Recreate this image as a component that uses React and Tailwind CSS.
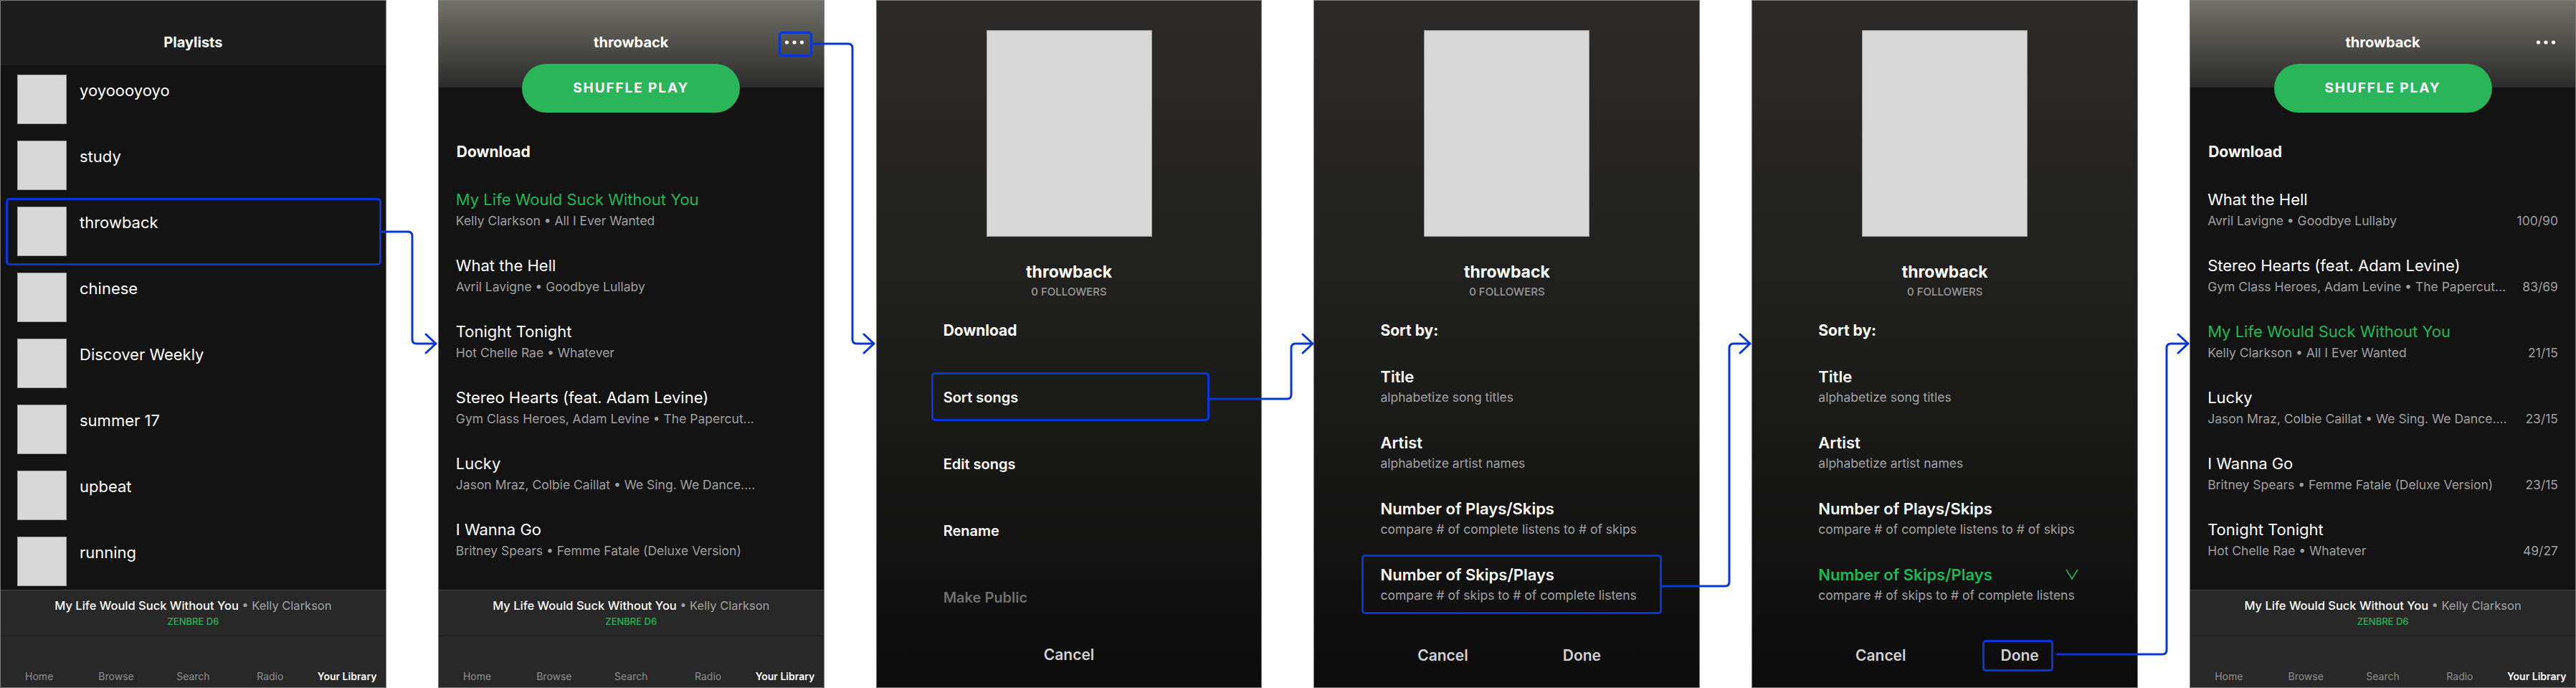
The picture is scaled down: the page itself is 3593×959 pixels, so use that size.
import React from "react";

const BLUE = "#0b36d6";

const playlists = [
  "yoyoooyoyo",
  "study",
  "throwback",
  "chinese",
  "Discover Weekly",
  "summer 17",
  "upbeat",
  "running",
];

const songsBefore = [
  { title: "My Life Would Suck Without You", sub: "Kelly Clarkson • All I Ever Wanted", active: true },
  { title: "What the Hell", sub: "Avril Lavigne • Goodbye Lullaby" },
  { title: "Tonight Tonight", sub: "Hot Chelle Rae • Whatever" },
  { title: "Stereo Hearts (feat. Adam Levine)", sub: "Gym Class Heroes, Adam Levine • The Papercut..." },
  { title: "Lucky", sub: "Jason Mraz, Colbie Caillat • We Sing. We Dance...." },
  { title: "I Wanna Go", sub: "Britney Spears • Femme Fatale (Deluxe Version)" },
];

const songsAfter = [
  { title: "What the Hell", sub: "Avril Lavigne • Goodbye Lullaby", count: "100/90" },
  { title: "Stereo Hearts (feat. Adam Levine)", sub: "Gym Class Heroes, Adam Levine • The Papercut...", count: "83/69" },
  { title: "My Life Would Suck Without You", sub: "Kelly Clarkson • All I Ever Wanted", count: "21/15", active: true },
  { title: "Lucky", sub: "Jason Mraz, Colbie Caillat • We Sing. We Dance....", count: "23/15" },
  { title: "I Wanna Go", sub: "Britney Spears • Femme Fatale (Deluxe Version)", count: "23/15" },
  { title: "Tonight Tonight", sub: "Hot Chelle Rae • Whatever", count: "49/27" },
];

const sortOptions = [
  { title: "Title", sub: "alphabetize song titles" },
  { title: "Artist", sub: "alphabetize artist names" },
  { title: "Number of Plays/Skips", sub: "compare # of complete listens to # of skips" },
  { title: "Number of Skips/Plays", sub: "compare # of skips to # of complete listens" },
];

const Panel = ({ className = "", children }) => (
  <div className={`relative flex min-w-0 flex-1 flex-col overflow-hidden border border-[#7d7d7d] ${className}`}>
    {children}
  </div>
);

const Highlight = ({ className }) => (
  <div className={`pointer-events-none absolute rounded-[5px] border-[3px] border-[#0b36d6] ${className}`} />
);

const Dots = () => (
  <svg width="28" height="8" viewBox="0 0 28 8">
    <circle cx="3.5" cy="4" r="2.6" fill="#fff" />
    <circle cx="14" cy="4" r="2.6" fill="#fff" />
    <circle cx="24.5" cy="4" r="2.6" fill="#fff" />
  </svg>
);

const BottomBars = () => (
  <div className="shrink-0">
    <div className="h-[65px] border-t border-[#444] border-b border-b-[#1b1b1b] bg-[#282828] pt-[11px] text-center">
      <div className="text-[16.5px] leading-[20px] font-medium text-white">
        My Life Would Suck Without You <span className="text-[#a3a3a3] font-normal">• Kelly Clarkson</span>
      </div>
      <div className="mt-[3px] text-[13px] leading-[18px] font-medium text-[#1db954]">ZENBRE D6</div>
    </div>
    <div className="grid h-[71px] grid-cols-5 items-end bg-[#282828] pb-[5px] text-center text-[14px] leading-[20px]">
      <span className="text-[#8f8f8f]">Home</span>
      <span className="text-[#8f8f8f]">Browse</span>
      <span className="text-[#8f8f8f]">Search</span>
      <span className="text-[#8f8f8f]">Radio</span>
      <span className="font-semibold text-white">Your Library</span>
    </div>
  </div>
);

const PlaylistHeader = ({ highlightDots }) => (
  <>
    <div className="relative flex h-[36px] items-center justify-center mt-[40px]">
      <span className="text-[20px] font-bold text-white">throwback</span>
      <div className="absolute right-[27px] top-[14px] flex">
        <Dots />
      </div>
      {highlightDots && <Highlight className="right-[16px] top-[3px] h-[35px] w-[47px]" />}
    </div>
    <div className="mt-[12px] flex justify-center">
      <div className="flex h-[68px] w-[304px] items-center justify-center rounded-full bg-[#2bb55a] text-[19px] font-bold tracking-[0.1em] text-white">
        SHUFFLE PLAY
      </div>
    </div>
    <div className="mt-[41px] px-[25px] text-[21px] leading-[28px] font-bold text-white">Download</div>
  </>
);

const SongRow = ({ song }) => (
  <div className="h-[92px] px-[24px]">
    <div className={`text-[22px] leading-[30px] whitespace-nowrap ${song.active ? "text-[#1db954]" : "text-white"}`}>
      {song.title}
    </div>
    <div className="flex justify-between text-[17.5px] leading-[30px] text-[#a0a0a0] whitespace-nowrap">
      <span>{song.sub}</span>
      {song.count && <span>{song.count}</span>}
    </div>
  </div>
);

const SheetTop = () => (
  <>
    <div className="mt-[41px] flex justify-center">
      <div className="h-[288px] w-[231px] border border-[#9d9d9d] bg-[#d7d7d7]" />
    </div>
    <div className="mt-[34px] text-center text-[23px] leading-[30px] font-bold text-white">throwback</div>
    <div className="mt-[2px] text-center text-[15px] leading-[22px] font-medium text-[#9a9a9a]">0 FOLLOWERS</div>
  </>
);

const SortPanel = ({ chosen }) => (
  <Panel className="bg-[linear-gradient(180deg,#2c2b29_0%,#1f1f1e_45%,#0c0c0c_100%)]">
    <SheetTop />
    <div className="mt-[29px] px-[92px] text-[21px] leading-[28px] font-bold text-white">Sort by:</div>
    <div className="mt-[36px]">
      {sortOptions.map((o, i) => {
        const isLast = i === sortOptions.length - 1;
        return (
          <div key={o.title} className="relative h-[92px] pl-[92px] pr-[82px]">
            <div
              className={`flex items-center justify-between text-[22px] leading-[28px] font-semibold ${
                chosen && isLast ? "text-[#1db954]" : "text-white"
              }`}
            >
              <span>{o.title}</span>
              {chosen && isLast && (
                <svg width="18" height="16" viewBox="0 0 18 16">
                  <polyline points="1,1 9,14 17,1" fill="none" stroke="#1db954" strokeWidth="1.6" />
                </svg>
              )}
            </div>
            <div className="text-[17.5px] leading-[30px] text-[#a3a3a3] whitespace-nowrap">{o.sub}</div>
            {!chosen && isLast && <Highlight className="-top-[14px] left-[66px] h-[83px] w-[419px]" />}
          </div>
        );
      })}
    </div>
    <div className="mt-[21px] grid grid-cols-2 pl-[82px] pr-[67px] text-center text-[21px] leading-[28px] font-semibold text-[#d2d2d2]">
      <span>Cancel</span>
      <span className="relative">
        Done
        {chosen && <Highlight className="-top-[8px] left-[45px] h-[44px] w-[99px]" />}
      </span>
    </div>
  </Panel>
);

export default function App() {
  return (
    <div className="relative flex h-[959px] w-[3593px] gap-[72px] bg-white font-['Inter','Liberation_Sans',sans-serif]">
      {/* 1: playlists */}
      <Panel className="bg-[#131313]">
        <div className="h-[90px] shrink-0 bg-[#1d1d1d] pt-[44px] text-center text-[20px] leading-[28px] font-bold text-white">
          Playlists
        </div>
        <div className="flex-1 overflow-hidden pt-[13px]">
          {playlists.map((name) => (
            <div key={name} className="relative flex h-[92px] px-[23px]">
              <div className="h-[69px] w-[69px] shrink-0 border border-[#9d9d9d] bg-[#d7d7d7]" />
              <span className="ml-[18px] mt-[8px] text-[22px] leading-[28px] text-white">{name}</span>
              {name === "throwback" && <Highlight className="-top-[12px] left-[7px] h-[94px] w-[524px]" />}
            </div>
          ))}
        </div>
        <BottomBars />
      </Panel>

      {/* 2: playlist view */}
      <Panel className="bg-[linear-gradient(180deg,#72716a_0px,#2b2b2b_121px,#131313_121px)]">
        <PlaylistHeader highlightDots />
        <div className="mt-[37px] flex-1 overflow-hidden">
          {songsBefore.map((s) => (
            <SongRow key={s.title} song={s} />
          ))}
        </div>
        <BottomBars />
      </Panel>

      {/* 3: options sheet */}
      <Panel className="bg-[linear-gradient(180deg,#2c2b29_0%,#1f1f1e_45%,#0c0c0c_100%)]">
        <SheetTop />
        <div className="mt-[29px] px-[93px] text-[21px] leading-[28px] font-bold text-white">Download</div>
        <div className="mt-[65px] px-[93px] text-[20px] leading-[28px] font-semibold">
          <div className="relative h-[93px] text-white">
            Sort songs
            <Highlight className="-top-[21px] left-[-17px] h-[68px] w-[388px]" />
          </div>
          <div className="h-[93px] text-white">Edit songs</div>
          <div className="h-[93px] text-white">Rename</div>
          <div className="h-[50px] text-[#6f6f6f]">Make Public</div>
        </div>
        <div className="mt-[30px] text-center text-[21px] leading-[28px] font-semibold text-[#d2d2d2]">Cancel</div>
      </Panel>

      {/* 4 & 5: sort sheet */}
      <SortPanel />
      <SortPanel chosen />

      {/* 6: sorted playlist */}
      <Panel className="bg-[linear-gradient(180deg,#72716a_0px,#2b2b2b_121px,#131313_121px)]">
        <PlaylistHeader />
        <div className="mt-[37px] flex-1 overflow-hidden">
          {songsAfter.map((s) => (
            <SongRow key={s.title} song={s} />
          ))}
        </div>
        <BottomBars />
      </Panel>

      {/* flow connectors */}
      <svg className="pointer-events-none absolute left-0 top-0" width="3593" height="959" fill="none">
        <g stroke={BLUE} strokeWidth="3" strokeLinecap="round" strokeLinejoin="round">
          <path d="M531 323 H569 Q575 323 575 329 V473 Q575 479 581 479 H608" />
          <path d="M594 466 L608 479 L594 492" />
          <path d="M1133 61 H1183 Q1189 61 1189 67 V473 Q1189 479 1195 479 H1219" />
          <path d="M1205 466 L1219 479 L1205 492" />
          <path d="M1685 556 H1795 Q1801 556 1801 550 V485 Q1801 479 1807 479 H1831" />
          <path d="M1817 466 L1831 479 L1817 492" />
          <path d="M2317 817 H2406 Q2412 817 2412 811 V485 Q2412 479 2418 479 H2441" />
          <path d="M2427 466 L2441 479 L2427 492" />
          <path d="M2869 912 H3016 Q3022 912 3022 906 V485 Q3022 479 3028 479 H3052" />
          <path d="M3038 466 L3052 479 L3038 492" />
        </g>
      </svg>
    </div>
  );
}
